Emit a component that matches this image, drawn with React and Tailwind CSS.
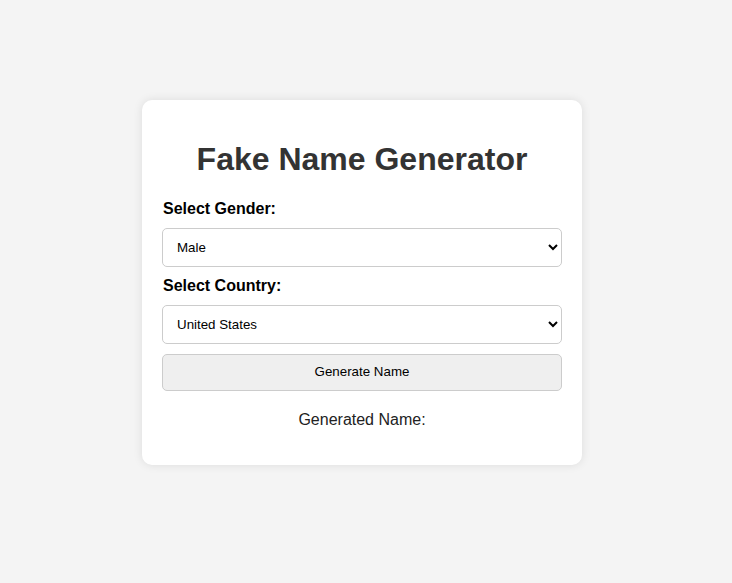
import React, { useState } from 'react';

const App = () => {
    const [gender, setGender] = useState('male');
    const [country, setCountry] = useState('us');
    const [name, setName] = useState('');

    return (
        <div className="min-h-screen bg-[#f4f4f4] flex items-center justify-center pr-2 pb-[19px] font-['Liberation_Sans',Arial,sans-serif]">
            <div className="w-[440px] bg-white rounded-[10px] p-5 shadow-[0_0_10px_rgba(0,0,0,0.1)]">
                <h1 className="text-[32px] leading-[37px] font-bold text-[#333] text-center mt-[21px] mb-[22px]">Fake Name Generator</h1>

                <label className="block pl-px text-base leading-[18px] font-bold text-black mb-[10px]">Select Gender:</label>
                <select
                    value={gender}
                    onChange={(e) => setGender(e.target.value)}
                    className="block w-full h-[39px] px-[10px] text-[13.33px] text-black bg-white border border-[#ccc] rounded-[5px] mb-[10px]"
                    style={{ appearance: 'auto' }}
                >
                    <option value="male">Male</option>
                    <option value="female">Female</option>
                </select>

                <label className="block pl-px text-base leading-[18px] font-bold text-black mb-[10px]">Select Country:</label>
                <select
                    value={country}
                    onChange={(e) => setCountry(e.target.value)}
                    className="block w-full h-[39px] px-[10px] text-[13.33px] text-black bg-white border border-[#ccc] rounded-[5px]"
                    style={{ appearance: 'auto' }}
                >
                    <option value="us">United States</option>
                    <option value="uk">United Kingdom</option>
                    <option value="ca">Canada</option>
                </select>

                <button
                    onClick={() => setName('John Smith')}
                    className="block w-full h-[37px] mt-[10px] text-[13.33px] text-black bg-[#efefef] border border-[#ccc] rounded-[5px]"
                >
                    Generate Name
                </button>

                <p className="text-base leading-[18px] text-[#222] text-center mt-[20px] mb-[16px]">Generated Name: {name}</p>
            </div>
        </div>
    );
};

export default App;
